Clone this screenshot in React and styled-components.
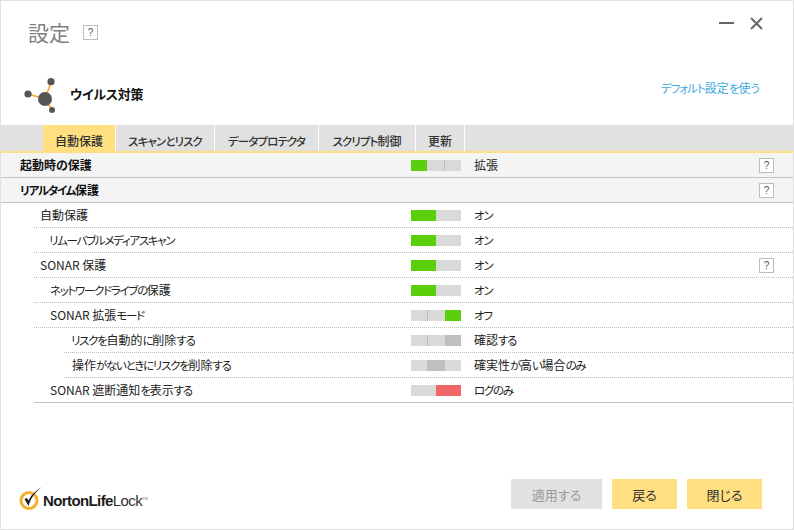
import React from "react";
import styled, { createGlobalStyle } from "styled-components";

const GREEN = "#5ccf0c";
const TRACK = "#d9d9d9";
const MUTED = "#bfbfbf";
const RED = "#f06666";

const GlobalStyle = createGlobalStyle`
  html, body {
    margin: 0;
    padding: 0;
    background: #fff;
  }
  body {
    font-family: "Noto Sans CJK JP", "Liberation Sans", sans-serif;
    font-size: 12px;
    font-feature-settings: "palt";
    color: #1a1a1a;
  }
`;

const Window = styled.div`
  box-sizing: border-box;
  width: 794px;
  height: 530px;
  border: 1px solid #e0e0e0;
  display: flex;
  flex-direction: column;
  overflow: hidden;
  background: #fff;
`;

const Header = styled.header`
  height: 124px;
  flex: none;
  display: flex;
  flex-direction: column;
`;

const TitleBar = styled.div`
  height: 61px;
  display: flex;
  align-items: flex-start;
  justify-content: space-between;
  padding: 17px 30px 0 27px;
  box-sizing: border-box;
`;

const TitleGroup = styled.div`
  display: flex;
  align-items: center;
  gap: 13px;
`;

const Title = styled.h1`
  margin: 0;
  font-size: 21px;
  line-height: 28px;
  font-weight: 400;
  color: #7f7f7f;
`;

const WindowButtons = styled.div`
  display: flex;
  align-items: center;
  gap: 16px;
  margin-top: -1px;
`;

const Section = styled.div`
  flex: 1;
  display: flex;
  align-items: flex-start;
  justify-content: space-between;
  padding: 0 34px 0 22px;
`;

const SectionName = styled.div`
  display: flex;
  align-items: center;
  gap: 11px;
  font-size: 13px;
  font-weight: 700;
  letter-spacing: -0.3px;
  color: #111;
  margin-top: 11px;
`;

const Kana = styled.span`
  font-size: 11.5px;
  letter-spacing: -1.3px;
`;

const DefaultLink = styled.a`
  font-size: 12px;
  line-height: 16px;
  color: #3fa9e0;
  margin-top: 18px;
  text-decoration: none;

  ${Kana} {
    letter-spacing: -1px;
  }
`;

const Help = styled.span`
  box-sizing: border-box;
  width: 15px;
  height: 15px;
  flex: none;
  border: 1px solid #bdbdbd;
  display: inline-flex;
  align-items: center;
  justify-content: center;
  font-family: "Liberation Sans", sans-serif;
  font-size: 10px;
  color: #555;
  background: #fff;
`;

const TabBar = styled.nav`
  height: 28px;
  flex: none;
  box-sizing: border-box;
  background: #e1e1e1;
  display: flex;
  padding-left: 42px;
  border-bottom: 2px solid #ffdf80;
`;

const Tab = styled.div`
  box-sizing: border-box;
  width: ${(p) => p.$width}px;
  display: flex;
  align-items: center;
  justify-content: center;
  border-right: 1px solid #fff;
  background: ${(p) => (p.$active ? "#ffdf80" : "transparent")};
  color: #333;
  font-weight: 500;
  font-size: 12px;
  padding-top: 4px;

  ${Kana} {
    letter-spacing: -0.9px;
  }
`;

const Row = styled.div`
  box-sizing: border-box;
  height: 25px;
  flex: none;
  display: grid;
  grid-template-columns: ${(p) => 410 - p.$rule}px 50px 1fr auto;
  align-items: center;
  padding-right: 19px;
  margin-left: ${(p) => p.$rule}px;
  border-bottom: 1px dotted #bdbdbd;

  &:last-child {
    border-bottom: 1px solid #c4c4c4;
  }
`;

const GroupRow = styled(Row)`
  padding-left: 19px;
  grid-template-columns: 391px 50px 1fr auto;
  background: #f4f4f4;
  border-bottom: 1px solid #c4c4c4;
`;

const GroupName = styled.div`
  font-weight: 700;
  font-size: 12px;
  color: #111;
  margin-top: -2px;
`;

const Name = styled.div`
  padding-left: ${(p) => p.$indent}px;
  color: #222;
  white-space: nowrap;
  margin-top: -2px;
`;

const Value = styled.div`
  padding-left: 13px;
  color: #222;
  margin-top: -1px;
`;

const Meter = styled.div`
  height: 11px;
  display: grid;
  grid-template-columns: ${(p) => (p.$count === 3 ? "16px 18px 16px" : "25px 25px")};
  background: ${TRACK};
`;

const tickShadow = { start: "inset 1px 0 0 #bdbdbd", end: "inset -1px 0 0 #bdbdbd" };

const Segment = styled.div`
  background: ${(p) => p.$color || "transparent"};
  box-shadow: ${(p) => tickShadow[p.$tick] || "none"};
`;

const Rows = styled.div`
  display: flex;
  flex-direction: column;
`;

const Footer = styled.footer`
  margin-top: auto;
  height: 67px;
  flex: none;
  box-sizing: border-box;
  display: flex;
  justify-content: space-between;
  padding: 17px 31px 0 18px;
`;

const Logo = styled.div`
  display: flex;
  align-items: center;
  height: 40px;
`;

const LogoText = styled.span`
  font-family: "Liberation Sans", sans-serif;
  font-size: 15px;
  font-weight: 700;
  letter-spacing: -0.6px;
  color: #1c1c1c;
  margin-top: 3px;
`;

const LogoLight = styled.span`
  font-weight: 400;
  color: #333;
`;

const Trademark = styled.sup`
  font-size: 4px;
  font-weight: 400;
  letter-spacing: 0;
  color: #777;
`;

const Actions = styled.div`
  display: flex;
  gap: 10px;
`;

const Button = styled.button`
  box-sizing: border-box;
  width: ${(p) => p.$width}px;
  height: 30px;
  border: 0;
  padding: 0;
  font: inherit;
  font-size: 13px;
  background: ${(p) => (p.disabled ? "#e1e1e1" : "#ffdf80")};
  color: ${(p) => (p.disabled ? "#9a9a9a" : "#333")};
`;

// the reference font has much narrower kana than Noto, kanji stay full width
function Jp({ text }) {
  return text
    .split(/([\u3040-\u30ff]+)/)
    .map((part, i) => (i % 2 ? <Kana key={i}>{part}</Kana> : part));
}

function VirusIcon() {
  return (
    <svg width="36" height="40" viewBox="0 0 36 40">
      <g stroke="#f5a81c" strokeWidth="1.6">
        <line x1="22" y1="26" x2="28" y2="9" />
        <line x1="22" y1="26" x2="5" y2="21" />
        <line x1="22" y1="26" x2="29" y2="37" />
      </g>
      <circle cx="22" cy="26" r="7" fill="#555" />
      <circle cx="5" cy="21" r="3.6" fill="#555" />
      <circle cx="28" cy="8.7" r="3.6" fill="#555" />
      <circle cx="29" cy="37" r="3" fill="#555" />
    </svg>
  );
}

function MinimizeIcon() {
  return (
    <svg width="15" height="12" viewBox="0 0 15 12">
      <line x1="0" y1="5" x2="15" y2="5" stroke="#666" strokeWidth="2" />
    </svg>
  );
}

function CloseIcon() {
  return (
    <svg width="13" height="13" viewBox="0 0 13 13">
      <path d="M1 1 L12 12 M12 1 L1 12" stroke="#666" strokeWidth="2" fill="none" />
    </svg>
  );
}

function NortonMark() {
  return (
    <svg width="24" height="26" viewBox="0 0 24 26">
      <circle cx="10" cy="14.5" r="8" fill="none" stroke="#f6b02c" strokeWidth="3" />
      <path d="M5.5 13 L9.5 20 C11.5 13 15.5 6.5 23 1 C16 5 12 9.5 9.5 14.5 L7.8 12 Z" fill="#1c1c1c" />
    </svg>
  );
}

const on = [{ color: GREEN }, {}];
const tabs = [
  { label: "自動保護", width: 73, active: true },
  { label: "スキャンとリスク", width: 99 },
  { label: "データプロテクタ", width: 104 },
  { label: "スクリプト制御", width: 97 },
  { label: "更新", width: 49 },
];

const rows = [
  { name: "自動保護", indent: 6, rule: 33, meter: on, value: "オン" },
  { name: "リムーバブルメディアスキャン", indent: 15, rule: 33, meter: on, value: "オン" },
  { name: "SONAR 保護", indent: 6, rule: 33, meter: on, value: "オン", help: true },
  { name: "ネットワークドライブの保護", indent: 16, rule: 33, meter: on, value: "オン" },
  {
    name: "SONAR 拡張モード",
    indent: 16,
    rule: 33,
    meter: [{}, { tick: "start" }, { color: GREEN }],
    value: "オフ",
  },
  {
    name: "リスクを自動的に削除する",
    indent: 7,
    rule: 63,
    meter: [{}, { tick: "start" }, { color: MUTED }],
    value: "確認する",
  },
  {
    name: "操作がないときにリスクを削除する",
    indent: 8,
    rule: 63,
    meter: [{}, { color: MUTED }, {}],
    value: "確実性が高い場合のみ",
  },
  { name: "SONAR 遮断通知を表示する", indent: 16, rule: 33, meter: [{}, { color: RED }], value: "ログのみ" },
];

function StateMeter({ parts }) {
  return (
    <Meter $count={parts.length}>
      {parts.map((p, i) => (
        <Segment key={i} $color={p.color} $tick={p.tick} />
      ))}
    </Meter>
  );
}

export default function App() {
  return (
    <>
      <GlobalStyle />
      <Window>
        <Header>
          <TitleBar>
            <TitleGroup>
              <Title>設定</Title>
              <Help>?</Help>
            </TitleGroup>
            <WindowButtons>
              <MinimizeIcon />
              <CloseIcon />
            </WindowButtons>
          </TitleBar>
          <Section>
            <SectionName>
              <VirusIcon />
              ウイルス対策
            </SectionName>
            <DefaultLink>
              <Jp text="デフォルト設定を使う" />
            </DefaultLink>
          </Section>
        </Header>

        <TabBar>
          {tabs.map((t) => (
            <Tab key={t.label} $width={t.width} $active={t.active}>
              <span>
                <Jp text={t.label} />
              </span>
            </Tab>
          ))}
        </TabBar>

        <Rows>
          <GroupRow $rule={0}>
            <GroupName>起動時の保護</GroupName>
            <StateMeter parts={[{ color: GREEN }, { tick: "end" }, {}]} />
            <Value>拡張</Value>
            <Help>?</Help>
          </GroupRow>
          <GroupRow $rule={0}>
            <GroupName>
              <Jp text="リアルタイム保護" />
            </GroupName>
            <span />
            <span />
            <Help>?</Help>
          </GroupRow>
        </Rows>

        <Rows>
          {rows.map((r) => (
            <Row key={r.name} $rule={r.rule}>
              <Name $indent={r.indent}>
                <Jp text={r.name} />
              </Name>
              <StateMeter parts={r.meter} />
              <Value>
                <Jp text={r.value} />
              </Value>
              {r.help ? <Help>?</Help> : <span />}
            </Row>
          ))}
        </Rows>

        <Footer>
          <Logo>
            <NortonMark />
            <LogoText>
              NortonLife<LogoLight>Lock</LogoLight>
              <Trademark>TM</Trademark>
            </LogoText>
          </Logo>
          <Actions>
            <Button disabled $width={91}>適用する</Button>
            <Button $width={65}>戻る</Button>
            <Button $width={75}>閉じる</Button>
          </Actions>
        </Footer>
      </Window>
    </>
  );
}
